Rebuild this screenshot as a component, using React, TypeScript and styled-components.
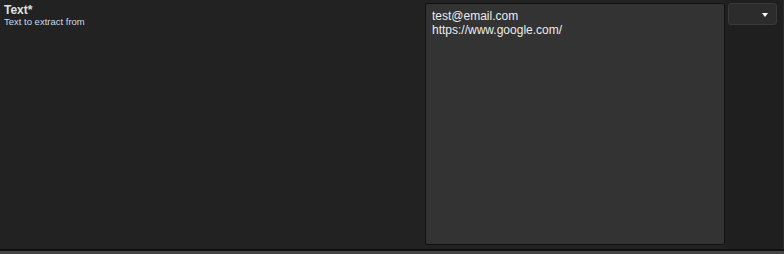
import React, { FC, useState } from 'react';
import styled, { createGlobalStyle } from 'styled-components';

const GlobalStyle = createGlobalStyle`
  html, body {
    margin: 0;
    padding: 0;
    background: #222222;
  }

  * {
    box-sizing: border-box;
  }
`;

const Page = styled.div`
  width: 784px;
  height: 254px;
  display: flex;
  flex-direction: column;
  font-family: "Liberation Sans", Arial, sans-serif;
  background: #222222;
`;

const FieldRow = styled.div`
  height: 249px;
  display: flex;
`;

const LabelBox = styled.div`
  flex: 1;
  padding: 3px 4px;
`;

const LabelTitle = styled.div`
  font-size: 12px;
  font-weight: bold;
  color: #e0e0e0;
  line-height: 14px;
`;

const LabelHint = styled.div`
  font-size: 9.5px;
  color: #c4dcf0;
  line-height: 10px;
`;

const InputBox = styled.div`
  width: 300px;
  padding-top: 3px;
`;

const TextArea = styled.textarea`
  display: block;
  width: 300px;
  height: 242px;
  margin: 0;
  padding: 5px 6px;
  resize: none;
  outline: none;

  font-family: "Liberation Sans", Arial, sans-serif;
  font-size: 12px;
  line-height: 14px;
  color: #ececec;

  background: #333333;
  border: 1px solid #111111;
  border-radius: 3px;
`;

const SideBox = styled.div`
  width: 59px;
  padding: 3px 0 0 3px;
  background: #1f1f1f;
  border-right: 1px solid #2c2c2c;
`;

const MenuButton = styled.button`
  width: 49px;
  height: 22px;
  padding: 0 8px 0 0;

  display: flex;
  align-items: center;
  justify-content: flex-end;

  background: #2c2c2c;
  border: 1px solid #393939;
  border-radius: 3px;
  cursor: pointer;
`;

const Caret = styled.span`
  display: block;
  width: 0;
  height: 0;
  margin-top: 1px;

  border-left: 3.5px solid transparent;
  border-right: 3.5px solid transparent;
  border-top: 4px solid #ffffff;
`;

const Divider = styled.div`
  height: 2px;
  background: #111111;
`;

const Footer = styled.div`
  flex: 1;
  background: #454545;
`;

const App: FC = () => {
	const [ text, setText ] = useState<string>('test@email.com\nhttps://www.google.com/');

	return (
		<>
			<GlobalStyle />
			<Page>
				<FieldRow>
					<LabelBox>
						<LabelTitle>Text*</LabelTitle>
						<LabelHint>Text to extract from</LabelHint>
					</LabelBox>
					<InputBox>
						<TextArea value={ text } onChange={ e => setText(e.target.value) } spellCheck={ false } />
					</InputBox>
					<SideBox>
						<MenuButton type="button">
							<Caret />
						</MenuButton>
					</SideBox>
				</FieldRow>
				<Divider />
				<Footer />
			</Page>
		</>
	);
};

export default App;
